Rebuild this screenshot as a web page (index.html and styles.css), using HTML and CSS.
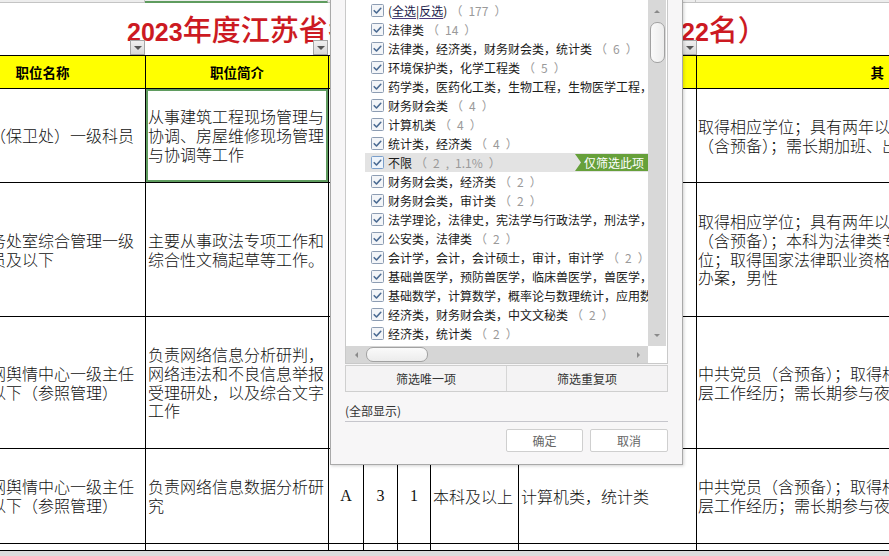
FILE: index.html
```html
<!DOCTYPE html>
<html lang="zh-CN">
<head>
<meta charset="utf-8">
<title>2023年度江苏省职位表 - 筛选</title>
<link rel="stylesheet" href="styles.css">
</head>
<body>
<div class="sheet">
  <div class="colbar">
    <div class="cb w1"></div><div class="cb w2 sel"></div><div class="cb w3"></div><div class="cb w4"></div><div class="cb w5"></div><div class="cb w6"></div><div class="cb w7"></div><div class="cb w8"></div>
  </div>
  <div class="titlerow">
    <div class="title">
      <div class="t-left"><span class="num">2023</span><span class="cj">年度江苏省考试录用公务员职位表（共招录1</span></div>
      <div class="t-right"><span class="num">22</span><span class="cj">名）</span></div>
    </div>
    <span class="fbtn fb1"></span>
    <span class="fbtn fb2"></span>
    <span class="fbtn fb3"></span>
  </div>
  <table class="grid">
    <colgroup>
      <col class="w1"><col class="w2"><col class="w3"><col class="w4"><col class="w5"><col class="w6"><col class="w7"><col class="w8">
    </colgroup>
    <tr class="hdr">
      <th class="h1">职位名称</th><th>职位简介</th><th>类别</th><th>开考比例</th><th>招考人数</th><th>学历</th><th>专业</th><th class="h8">其他条件</th>
    </tr>
    <tr class="r1">
      <td class="c1">（保卫处）一级科员</td>
      <td class="c2 cur">从事建筑工程现场管理与<br>协调、房屋维修现场管理<br>与协调等工作</td>
      <td class="ctr">A</td><td class="ctr">3</td><td class="ctr">1</td>
      <td>本科及以上</td><td>土木类</td>
      <td class="c8">取得相应学位；具有两年以上基层工作经历；中共党员<br>（含预备）；需长期加班、出差，适合男性</td>
    </tr>
    <tr class="r2">
      <td class="c1">务处室综合管理一级<br>员及以下</td>
      <td class="c2">主要从事政法专项工作和<br>综合性文稿起草等工作。</td>
      <td class="ctr">A</td><td class="ctr">3</td><td class="ctr">1</td>
      <td>本科及以上</td><td>法律类</td>
      <td class="c8">取得相应学位；具有两年以上基层工作经历；中共党员<br>（含预备）；本科为法律类专业，并取得相应学<br>位；取得国家法律职业资格证书；需长期外出<br>办案，男性</td>
    </tr>
    <tr class="r3">
      <td class="c1">网舆情中心一级主任<br>以下（参照管理）</td>
      <td class="c2">负责网络信息分析研判，<br>网络违法和不良信息举报<br>受理研处，以及综合文字<br>工作</td>
      <td class="ctr">A</td><td class="ctr">3</td><td class="ctr">1</td>
      <td>本科及以上</td><td>中文文秘类</td>
      <td class="c8">中共党员（含预备）；取得相应学位；具有两年以上基<br>层工作经历；需长期参与夜间值班</td>
    </tr>
    <tr class="r4">
      <td class="c1">网舆情中心一级主任<br>以下（参照管理）</td>
      <td class="c2">负责网络信息数据分析研<br>究</td>
      <td class="ctr">A</td><td class="ctr">3</td><td class="ctr">1</td>
      <td>本科及以上</td><td>计算机类，统计类</td>
      <td class="c8">中共党员（含预备）；取得相应学位；具有两年以上基<br>层工作经历；需长期参与夜间值班</td>
    </tr>
    <tr class="r5">
      <td class="c1"></td><td></td><td></td><td></td><td></td><td></td><td></td><td></td>
    </tr>
  </table>
  <div class="hbar"></div>
</div>

<div class="dialog">
  <div class="listbox">
    <div class="items">
      <div class="item"><svg class="ck" viewBox="0 0 13 13"><rect x="0.5" y="0.5" width="12" height="12" rx="1"/><path d="M3.2 6.7l2.3 2.3 4.3-4.7"/></svg><span class="txt">(<u>全选</u>|<u>反选</u>)</span><span class="cnt">（&ensp;177&ensp;）</span></div>
      <div class="item"><svg class="ck" viewBox="0 0 13 13"><rect x="0.5" y="0.5" width="12" height="12" rx="1"/><path d="M3.2 6.7l2.3 2.3 4.3-4.7"/></svg><span class="txt">法律类</span><span class="cnt">（&ensp;14&ensp;）</span></div>
      <div class="item"><svg class="ck" viewBox="0 0 13 13"><rect x="0.5" y="0.5" width="12" height="12" rx="1"/><path d="M3.2 6.7l2.3 2.3 4.3-4.7"/></svg><span class="txt">法律类，经济类，财务财会类，统计类</span><span class="cnt">（&ensp;6&ensp;）</span></div>
      <div class="item"><svg class="ck" viewBox="0 0 13 13"><rect x="0.5" y="0.5" width="12" height="12" rx="1"/><path d="M3.2 6.7l2.3 2.3 4.3-4.7"/></svg><span class="txt">环境保护类，化学工程类</span><span class="cnt">（&ensp;5&ensp;）</span></div>
      <div class="item"><svg class="ck" viewBox="0 0 13 13"><rect x="0.5" y="0.5" width="12" height="12" rx="1"/><path d="M3.2 6.7l2.3 2.3 4.3-4.7"/></svg><span class="txt">药学类，医药化工类，生物工程，生物医学工程，生物技术类</span><span class="cnt">（&ensp;4&ensp;）</span></div>
      <div class="item"><svg class="ck" viewBox="0 0 13 13"><rect x="0.5" y="0.5" width="12" height="12" rx="1"/><path d="M3.2 6.7l2.3 2.3 4.3-4.7"/></svg><span class="txt">财务财会类</span><span class="cnt">（&ensp;4&ensp;）</span></div>
      <div class="item"><svg class="ck" viewBox="0 0 13 13"><rect x="0.5" y="0.5" width="12" height="12" rx="1"/><path d="M3.2 6.7l2.3 2.3 4.3-4.7"/></svg><span class="txt">计算机类</span><span class="cnt">（&ensp;4&ensp;）</span></div>
      <div class="item"><svg class="ck" viewBox="0 0 13 13"><rect x="0.5" y="0.5" width="12" height="12" rx="1"/><path d="M3.2 6.7l2.3 2.3 4.3-4.7"/></svg><span class="txt">统计类，经济类</span><span class="cnt">（&ensp;4&ensp;）</span></div>
      <div class="item hot"><svg class="ck" viewBox="0 0 13 13"><rect x="0.5" y="0.5" width="12" height="12" rx="1"/><path d="M3.2 6.7l2.3 2.3 4.3-4.7"/></svg><span class="txt">不限</span><span class="cnt">（&ensp;2&ensp;,&ensp;1.1%&ensp;）</span><span class="only">仅筛选此项</span></div>
      <div class="item"><svg class="ck" viewBox="0 0 13 13"><rect x="0.5" y="0.5" width="12" height="12" rx="1"/><path d="M3.2 6.7l2.3 2.3 4.3-4.7"/></svg><span class="txt">财务财会类，经济类</span><span class="cnt">（&ensp;2&ensp;）</span></div>
      <div class="item"><svg class="ck" viewBox="0 0 13 13"><rect x="0.5" y="0.5" width="12" height="12" rx="1"/><path d="M3.2 6.7l2.3 2.3 4.3-4.7"/></svg><span class="txt">财务财会类，审计类</span><span class="cnt">（&ensp;2&ensp;）</span></div>
      <div class="item"><svg class="ck" viewBox="0 0 13 13"><rect x="0.5" y="0.5" width="12" height="12" rx="1"/><path d="M3.2 6.7l2.3 2.3 4.3-4.7"/></svg><span class="txt">法学理论，法律史，宪法学与行政法学，刑法学，民商法学</span><span class="cnt">（&ensp;2&ensp;）</span></div>
      <div class="item"><svg class="ck" viewBox="0 0 13 13"><rect x="0.5" y="0.5" width="12" height="12" rx="1"/><path d="M3.2 6.7l2.3 2.3 4.3-4.7"/></svg><span class="txt">公安类，法律类</span><span class="cnt">（&ensp;2&ensp;）</span></div>
      <div class="item"><svg class="ck" viewBox="0 0 13 13"><rect x="0.5" y="0.5" width="12" height="12" rx="1"/><path d="M3.2 6.7l2.3 2.3 4.3-4.7"/></svg><span class="txt">会计学，会计，会计硕士，审计，审计学</span><span class="cnt">（&ensp;2&ensp;）</span></div>
      <div class="item"><svg class="ck" viewBox="0 0 13 13"><rect x="0.5" y="0.5" width="12" height="12" rx="1"/><path d="M3.2 6.7l2.3 2.3 4.3-4.7"/></svg><span class="txt">基础兽医学，预防兽医学，临床兽医学，兽医学，动物医学</span><span class="cnt">（&ensp;2&ensp;）</span></div>
      <div class="item"><svg class="ck" viewBox="0 0 13 13"><rect x="0.5" y="0.5" width="12" height="12" rx="1"/><path d="M3.2 6.7l2.3 2.3 4.3-4.7"/></svg><span class="txt">基础数学，计算数学，概率论与数理统计，应用数学</span><span class="cnt">（&ensp;2&ensp;）</span></div>
      <div class="item"><svg class="ck" viewBox="0 0 13 13"><rect x="0.5" y="0.5" width="12" height="12" rx="1"/><path d="M3.2 6.7l2.3 2.3 4.3-4.7"/></svg><span class="txt">经济类，财务财会类，中文文秘类</span><span class="cnt">（&ensp;2&ensp;）</span></div>
      <div class="item"><svg class="ck" viewBox="0 0 13 13"><rect x="0.5" y="0.5" width="12" height="12" rx="1"/><path d="M3.2 6.7l2.3 2.3 4.3-4.7"/></svg><span class="txt">经济类，统计类</span><span class="cnt">（&ensp;2&ensp;）</span></div>
    </div>
    <div class="vscroll">
      <div class="arr"><span class="tri up"></span></div>
      <div class="vthumb"></div>
      <div class="fill"></div>
      <div class="arr"><span class="tri down"></span></div>
    </div>
    <div class="hscroll">
      <div class="harr"><span class="tri left"></span></div>
      <div class="hthumb"></div>
      <div class="fill"></div>
      <div class="harr"><span class="tri right"></span></div>
    </div>
    <div class="corner"></div>
  </div>
  <div class="modebar">
    <div class="mode">筛选唯一项</div>
    <div class="mode">筛选重复项</div>
  </div>
  <div class="showall">(全部显示)</div>
  <div class="actions">
    <button class="btn ok">确定</button>
    <button class="btn cancel">取消</button>
  </div>
</div>
</body>
</html>
```

FILE: styles.css
```css
* { box-sizing: border-box; }
html, body { margin: 0; padding: 0; }
body {
  width: 889px;
  height: 556px;
  overflow: hidden;
  position: relative;
  background: #fff;
  font-family: "Noto Sans CJK SC", "Noto Sans", sans-serif;
  color: #000;
}

/* column widths */
.w1 { width: 204px; }
.w2 { width: 183px; }
.w3 { width: 35px; }
.w4 { width: 34px; }
.w5 { width: 33px; }
.w6 { width: 88px; }
.w7 { width: 178px; }
.w8 { width: 426px; }

.sheet { width: 889px; }

.colbar {
  display: flex;
  margin-left: -59px;
  height: 3px;
}
.cb {
  flex: none;
  height: 3px;
  background: #ededed;
  border-bottom: 1px solid #c4c4c4;
  border-right: 1px solid #c4c4c4;
}
.cb.sel { border-bottom: 2px solid #5f9c5f; }

.titlerow {
  position: relative;
  height: 52px;
}
.title {
  display: flex;
  align-items: center;
  height: 52px;
  padding: 0 0 2px 127px;
  color: #cc1a22;
  white-space: nowrap;
}
.t-left {
  width: 554px;
  overflow: hidden;
  display: flex;
  align-items: baseline;
}
.t-right {
  display: flex;
  align-items: baseline;
}
.num {
  font-family: "Liberation Sans", Arial, sans-serif;
  font-weight: bold;
  font-size: 25px;
}
.cj {
  font-family: "Noto Sans CJK SC", sans-serif;
  font-size: 29px;
  font-weight: 500;
}

.fbtn {
  position: absolute;
  top: 37px;
  width: 15px;
  height: 15px;
  background: linear-gradient(#f0f0f0, #d8d8d8);
  border: 1px solid #a6a6a6;
}
.fbtn::after {
  content: "";
  position: absolute;
  left: 3px;
  top: 5px;
  border-left: 4px solid transparent;
  border-right: 4px solid transparent;
  border-top: 4px solid #555;
}
.fb1 { left: 130px; }
.fb2 { left: 313px; }
.fb3 { left: 682px; }

/* grid */
.grid {
  border-collapse: collapse;
  table-layout: fixed;
  width: 1181px;
  margin-left: -59px;
}
.grid th, .grid td {
  border: 1px solid #000;
  padding: 0 2px;
  white-space: nowrap;
  vertical-align: middle;
  text-align: left;
  overflow: hidden;
}
.grid td {
  font-size: 16px;
  line-height: 18.7px;
  font-weight: 300;
  color: #111;
}
.grid th {
  background: #ffff00;
  font-size: 13.5px;
  font-weight: bold;
  text-align: center;
  color: #000;
}
.grid th.h1 { padding-left: 0; }
.grid th.h8 { letter-spacing: 6px; }
.grid td.c1 { padding-left: 48px; overflow: visible; }
.grid td.c8 { padding-left: 1px; }
.grid td.ctr {
  text-align: center;
  font-family: "Liberation Serif", serif;
  font-weight: normal;
  font-size: 16px;
}
.grid td.cur {
  box-shadow: inset 0 0 0 2px #5f9c5f;
}
.hdr { height: 33px; }
.r1 { height: 94px; }
.r2 { height: 134px; }
.r3 { height: 132px; }
.r4 { height: 95px; }
.r5 { height: 7px; }

.hbar {
  height: 20px;
  background: #dcdcdc;
}

/* dialog */
.dialog {
  position: absolute;
  left: 330px;
  top: 0;
  width: 353px;
  height: 465px;
  background: #f7f6f7;
  border: 1px solid #a9a9a9;
  border-top: none;
  box-shadow: 1px 1px 3px rgba(0, 0, 0, 0.18);
  padding: 0 14px;
  display: flex;
  flex-direction: column;
  font-family: "Noto Sans CJK SC", sans-serif;
  font-size: 12px;
  color: #222;
}

.listbox {
  height: 364px;
  flex: none;
  background: #fff;
  border: 1px solid #c9c9c9;
  border-top: none;
  padding-right: 1px;
  display: grid;
  grid-template-columns: 1fr 18px;
  grid-template-rows: 1fr 17px;
}
.items {
  overflow: hidden;
  padding-top: 1px;
}
.item {
  position: relative;
  height: 19px;
  display: flex;
  align-items: center;
  padding-left: 25px;
  white-space: nowrap;
}
.ck {
  flex: none;
  width: 13px;
  height: 13px;
  margin-right: 4px;
}
.ck rect { fill: #f3f5f8; stroke: #8d9db3; stroke-width: 1; }
.ck path { fill: none; stroke: #4a6a92; stroke-width: 1.6; stroke-linecap: round; stroke-linejoin: round; }
.txt { color: #1a1a1a; }
.txt u { text-decoration-color: #4a3b7c; text-underline-offset: 2px; color: #20204a; }
.cnt {
  color: #9a9a9a;
  margin-left: 3px;
}
.item.hot {
  background: linear-gradient(to right, transparent 19px, #e3e3e3 19px);
}
.item.hot .ck rect { fill: #eef4fb; stroke: #7a9fcb; }
.only {
  position: absolute;
  right: 0;
  top: 1px;
  bottom: 1px;
  width: 73px;
  background: #66a03a;
  color: #fff;
  display: flex;
  align-items: center;
  justify-content: flex-end;
  padding-right: 4px;
  clip-path: polygon(0 0, 100% 0, 100% 100%, 0 100%, 6px 50%);
}

.vscroll {
  background: #d8d8d8;
  display: flex;
  flex-direction: column;
  align-items: center;
}
.arr {
  height: 22px;
  width: 100%;
  display: flex;
  align-items: center;
  justify-content: center;
  flex: none;
}
.vthumb {
  flex: none;
  width: 15px;
  height: 41px;
  background: linear-gradient(to right, #fafafa, #ececec);
  border: 1px solid #a2a2a2;
  border-radius: 7px;
}
.fill { flex: 1; }
.hscroll {
  background: #d6d6d6;
  display: flex;
  align-items: center;
}
.harr {
  width: 20px;
  height: 100%;
  display: flex;
  align-items: center;
  justify-content: center;
  flex: none;
}
.hthumb {
  flex: none;
  width: 62px;
  height: 15px;
  background: linear-gradient(#fafafa, #ececec);
  border: 1px solid #a2a2a2;
  border-radius: 7px;
}
.corner { background: #fff; }
.tri { width: 0; height: 0; display: block; }
.tri.up { border-left: 3px solid transparent; border-right: 3px solid transparent; border-bottom: 3px solid #8a8a8a; }
.tri.down { border-left: 3px solid transparent; border-right: 3px solid transparent; border-top: 3px solid #8a8a8a; }
.tri.left { border-top: 3px solid transparent; border-bottom: 3px solid transparent; border-right: 3px solid #8a8a8a; }
.tri.right { border-top: 3px solid transparent; border-bottom: 3px solid transparent; border-left: 3px solid #8a8a8a; }

.modebar {
  flex: none;
  margin-top: 1px;
  height: 27px;
  border: 1px solid #cfcfcf;
  background: #f4f3f4;
  display: grid;
  grid-template-columns: 161px 1fr;
}
.mode {
  display: flex;
  align-items: center;
  justify-content: center;
  color: #333;
}
.mode:first-child { border-right: 1px solid #d6d6d6; }

.showall {
  flex: none;
  height: 30px;
  padding-top: 7px;
  display: flex;
  align-items: center;
  border-bottom: 1px solid #c6c6cc;
  color: #333;
}

.actions {
  flex: none;
  margin-top: 7px;
  display: flex;
  justify-content: flex-end;
  gap: 7px;
}
.btn {
  height: 23px;
  background: #fff;
  border: 1px solid #cfcfcf;
  border-radius: 2px;
  color: #666;
  font-family: "Noto Sans CJK SC", sans-serif;
  font-size: 12px;
  padding: 0;
}
.btn.ok { width: 77px; }
.btn.cancel { width: 78px; }
```
